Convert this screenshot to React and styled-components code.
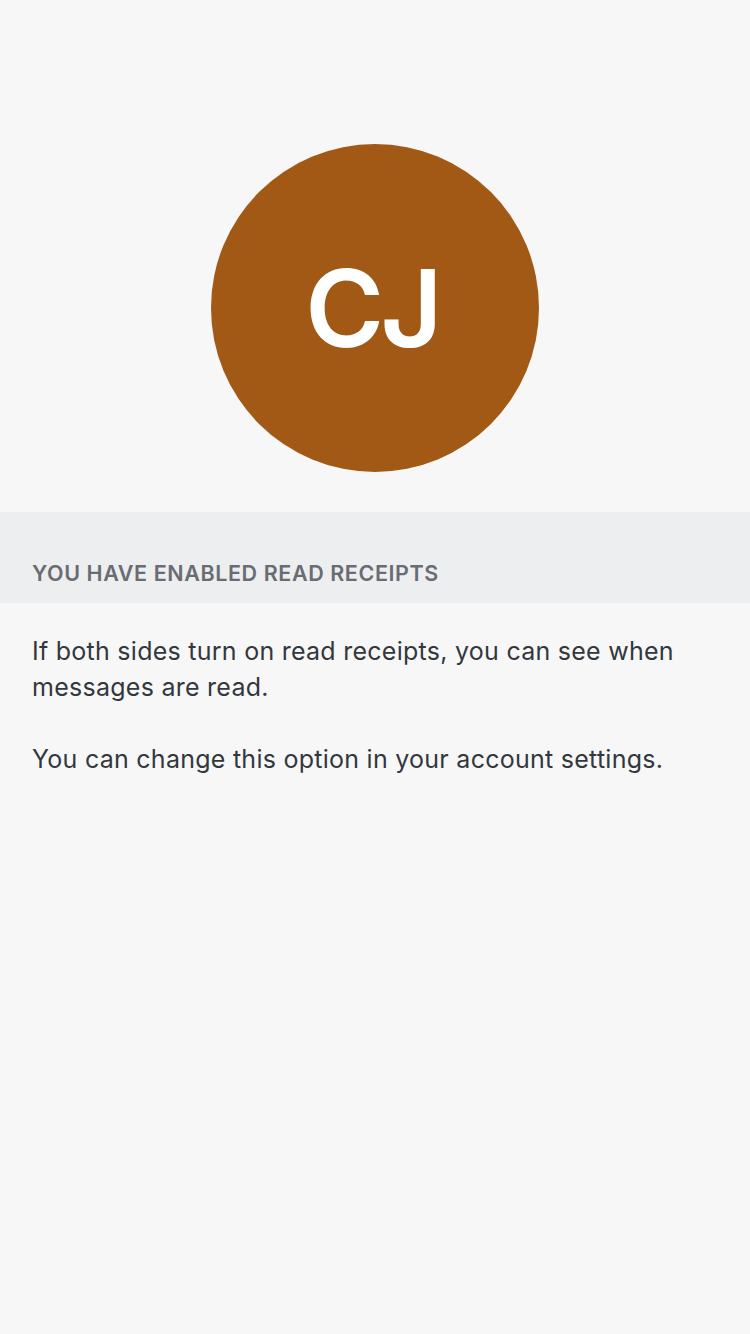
import React from "react";
import styled, { createGlobalStyle } from "styled-components";

const GlobalStyle = createGlobalStyle`
  body { margin: 0; background: #f7f7f7; }
  * { box-sizing: border-box; }
`;

const Screen = styled.main`
  min-height: 1334px;
  background: #f7f7f7;
  font-family: Inter, "Liberation Sans", sans-serif;
  color: #33373e;
`;

const Profile = styled.header`
  display: flex;
  justify-content: center;
  padding: 144px 0 40px;
`;

const Avatar = styled.div`
  display: flex;
  align-items: center;
  justify-content: center;
  width: 328px;
  height: 328px;
  padding: 1px 6px 0 0;
  border-radius: 50%;
  background: #a25915;
`;

const Initials = styled.span`
  color: #fff;
  font-size: 107px;
  font-weight: 570;
  line-height: 1;
  letter-spacing: -3.7px;
  white-space: nowrap;
`;

const SectionHeader = styled.h2`
  margin: 0;
  height: 91px;
  padding: 48px 32px 0;
  background: #edeef0;
  color: #696c73;
  font-size: 21.5px;
  font-weight: 570;
  line-height: 27px;
  letter-spacing: 0.59px;
  text-transform: uppercase;
`;

const Details = styled.section`
  display: grid;
  gap: 36px;
  padding: 30px 32px;
`;

const Paragraph = styled.p`
  margin: 0;
  font-size: 25px;
  line-height: 36px;
  letter-spacing: 0.26px;
`;

export default function App() {
  return (
    <Screen>
      <GlobalStyle />
      <Profile>
        <Avatar><Initials>CJ</Initials></Avatar>
      </Profile>
      <SectionHeader>You have enabled read receipts</SectionHeader>
      <Details>
        <Paragraph>
          If both sides turn on read receipts, you can see when<br />messages are read.
        </Paragraph>
        <Paragraph>You can change this option in your account settings.</Paragraph>
      </Details>
    </Screen>
  );
}
